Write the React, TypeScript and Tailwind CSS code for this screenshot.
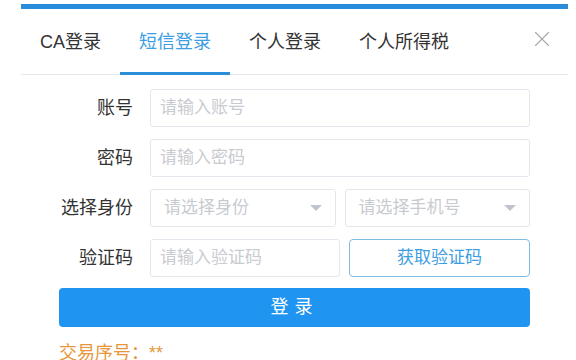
import { X } from "lucide-react";

const font = { fontFamily: '"Liberation Sans", "Noto Sans CJK SC", sans-serif' };

function Caret() {
  return (
    <svg viewBox="0 0 12 6" className="h-[6px] w-[12px]">
      <path d="M0 0H12L6 6Z" fill="#c0c4cc" />
    </svg>
  );
}

function Field({ label, children }: { label: string; children: React.ReactNode }) {
  return (
    <div className="flex h-[38px] items-center gap-[17px]">
      <div className="w-[74px] shrink-0 text-right text-[18px] text-[#333]">{label}</div>
      <div className="flex flex-1 gap-[9px]">{children}</div>
    </div>
  );
}

function Input({ placeholder }: { placeholder: string }) {
  return (
    <div className="flex h-[38px] flex-1 items-center rounded-[3px] border border-[#e4e7ed] bg-white pl-[9px] text-[17px] text-[#c8cbd0]">
      {placeholder}
    </div>
  );
}

function Select({ placeholder }: { placeholder: string }) {
  return (
    <div className="flex h-[38px] flex-1 items-center justify-between rounded-[3px] border border-[#e4e7ed] bg-white pl-[13px] pr-[13px] text-[17px] text-[#c8cbd0]">
      <span>{placeholder}</span>
      <Caret />
    </div>
  );
}

export default function App() {
  const tabs = ["CA登录", "短信登录", "个人登录", "个人所得税"];
  return (
    <div className="h-[360px] w-[576px] overflow-hidden bg-white" style={font}>
      <div className="ml-[21px] w-[547px]">
        {/* top strip */}
        <div className="mt-[4px] h-[5px] bg-[#2a8ddc]" />

        {/* tabs */}
        <div className="relative flex h-[66px] items-center border-b border-[#e6e8eb]">
          {tabs.map((t, i) => (
            <div
              key={t}
              className={
                i === 1
                  ? "relative flex h-full items-center px-[19px] pt-[1px] text-[18px] text-[#3d9ee2]"
                  : "relative flex h-full items-center px-[19px] pt-[1px] text-[18px] text-[#333]"
              }
            >
              {t}
              {i === 1 && (
                <div className="absolute bottom-[-1px] left-0 right-0 h-[3px] bg-[#2a8fd6]" />
              )}
            </div>
          ))}
          <div className="ml-auto mr-[13px] mb-[6px] text-[#a8a8a8]">
            <X size={26} strokeWidth={1} />
          </div>
        </div>

        {/* form */}
        <div className="flex flex-col gap-[12px] px-[38px] pt-[14px]">
          <Field label="账号">
            <Input placeholder="请输入账号" />
          </Field>
          <Field label="密码">
            <Input placeholder="请输入密码" />
          </Field>
          <Field label="选择身份">
            <Select placeholder="请选择身份" />
            <Select placeholder="请选择手机号" />
          </Field>
          <Field label="验证码">
            <Input placeholder="请输入验证码" />
            <div className="flex h-[38px] flex-1 items-center justify-center rounded-[4px] border border-[#7fbbe3] text-[17px] text-[#3d9ee2]">
              获取验证码
            </div>
          </Field>
          <div className="mt-[-1px] flex h-[39px] items-center justify-center rounded-[4px] bg-[#1f95f1] text-[18px] tracking-[6px] text-white">
            登录
          </div>
          <div className="mt-[1px] text-[18px] text-[#e8963c]">交易序号：**</div>
        </div>
      </div>
    </div>
  );
}
